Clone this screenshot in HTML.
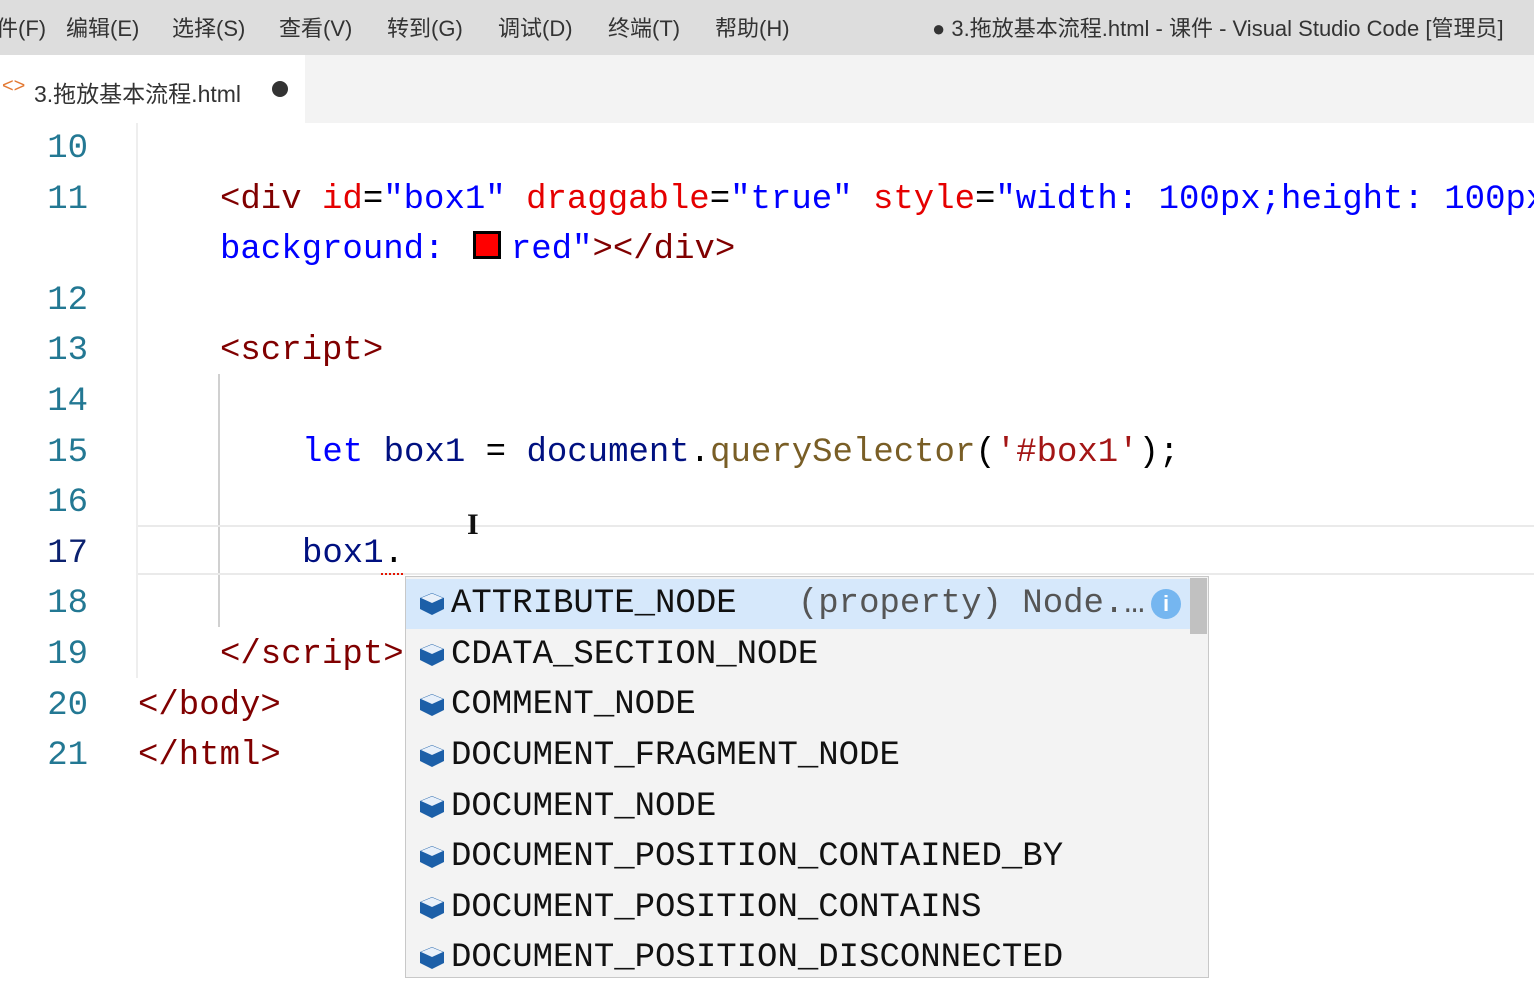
<!DOCTYPE html>
<html><head><meta charset="utf-8"><style>
body{margin:0;width:1534px;height:959px;overflow:hidden;background:#fff;position:relative;font-family:"Liberation Sans","Noto Sans CJK SC",sans-serif}
#menu{position:absolute;left:0;top:0;width:1534px;height:55px;background:#dddddd;color:#333;font-size:22px}
#menu span{position:absolute;top:11px}
#tabs{position:absolute;left:0;top:55px;width:1534px;height:68px;background:#f3f3f3}
#tab{position:absolute;left:0;top:0;width:305px;height:68px;background:#fff;font-size:23px;color:#333}
.code{position:absolute;font-family:"Liberation Mono",monospace;font-size:34px;line-height:50px;white-space:pre}
.ln{position:absolute;left:0;width:88px;text-align:right;color:#237893;font-family:"Liberation Mono",monospace;font-size:34px;line-height:50px}
.t{color:#800000}.a{color:#e50000}.v{color:#0000ff}.k{color:#0000ff}.i{color:#001080}.f{color:#795e26}.s{color:#a31515}.p{color:#000}
#pop{position:absolute;left:405px;top:576px;width:802px;height:400px;background:#f3f3f3;border:1px solid #c8c8c8}
.row{position:absolute;left:0;width:784px;height:50px;font-family:"Liberation Mono",monospace;font-size:34px;line-height:50px;white-space:pre;color:#111}
.row svg{position:absolute;left:12px;top:12px}
.row span.n{position:absolute;left:45px}
</style></head><body>
<div id="menu">
<span style="left:-4px">件(F)</span><span style="left:66px">编辑(E)</span><span style="left:172px">选择(S)</span><span style="left:279px">查看(V)</span><span style="left:387px">转到(G)</span><span style="left:498px">调试(D)</span><span style="left:608px">终端(T)</span><span style="left:715px">帮助(H)</span>
<span style="left:932px">● 3.拖放基本流程.html - 课件 - Visual Studio Code [管理员]</span>
</div>
<div id="tabs"><div id="tab"><span style="position:absolute;left:2px;top:20px;color:#e37933;font-size:20px">&lt;&gt;</span><span style="position:absolute;left:34px;top:20px">3.拖放基本流程.html</span><span style="position:absolute;left:272px;top:26px;width:16px;height:16px;border-radius:50%;background:#333"></span></div></div>
<div style="position:absolute;left:136px;top:123px;width:2px;height:555px;background:#eee"></div>
<div style="position:absolute;left:218px;top:374px;width:2px;height:253px;background:#d0d0d0"></div>
<div style="position:absolute;left:138px;top:525px;width:1400px;height:46px;border-top:2px solid #eaeaea;border-bottom:2px solid #eaeaea"></div>

<div class="ln" style="top:124px">10</div>
<div class="ln" style="top:175px">11</div>
<div class="ln" style="top:276px">12</div>
<div class="ln" style="top:326px">13</div>
<div class="ln" style="top:377px">14</div>
<div class="ln" style="top:428px">15</div>
<div class="ln" style="top:478px">16</div>
<div class="ln" style="top:529px;color:#0b216f">17</div>
<div class="ln" style="top:579px">18</div>
<div class="ln" style="top:630px">19</div>
<div class="ln" style="top:681px">20</div>
<div class="ln" style="top:731px">21</div>

<div class="code" style="left:220px;top:175px"><span class="t">&lt;div</span> <span class="a">id</span><span class="p">=</span><span class="v">"box1"</span> <span class="a">draggable</span><span class="p">=</span><span class="v">"true"</span> <span class="a">style</span><span class="p">=</span><span class="v">"width: 100px;height: 100px;</span></div>
<div class="code" style="left:220px;top:225px"><span class="v">background: </span><span style="display:inline-block;width:22px;height:22px;background:#f00;border:3px solid #000;margin:0 10px 0 8px;vertical-align:-1px"></span><span class="v">red"</span><span class="t">&gt;&lt;/div&gt;</span></div>
<div class="code t" style="left:220px;top:326px">&lt;script&gt;</div>
<div class="code" style="left:302px;top:428px"><span class="k">let</span> <span class="i">box1</span> <span class="p">=</span> <span class="i">document</span><span class="p">.</span><span class="f">querySelector</span><span class="p">(</span><span class="s">'#box1'</span><span class="p">);</span></div>
<div class="code i" style="left:302px;top:529px">box1<span class="p">.</span></div>
<div style="position:absolute;left:381px;top:568px;width:22px;height:5px;border-bottom:2px dotted #e51400"></div>
<div class="code t" style="left:220px;top:630px">&lt;/script&gt;</div>
<div class="code t" style="left:138px;top:681px">&lt;/body&gt;</div>
<div class="code t" style="left:138px;top:731px">&lt;/html&gt;</div>
<div style="position:absolute;left:467px;top:508px;font-family:'Liberation Serif',serif;font-size:30px;font-weight:bold;color:#111">I</div>

<div id="pop">
<div style="position:absolute;left:784px;top:1px;width:17px;height:56px;background:#c1c1c1"></div>
<div class="row" style="top:2px;background:#d6e8fb"><svg width="28" height="26" viewBox="0 0 28 26"><path d="M14 2 L26 7 L26 18 L14 24 L2 18 L2 7Z" fill="#1c5fa8"/><path d="M3 7 L14 2.5 L25 7 L14 12Z" fill="#e8f0fa"/></svg><span class="n">ATTRIBUTE_NODE   <span style="color:#555">(property) Node.…</span></span><span style="position:absolute;left:745px;top:10px;width:30px;height:30px;border-radius:50%;background:#75b6f0;color:#fff;font:bold 22px 'Liberation Sans';text-align:center;line-height:30px">i</span></div>
<div class="row" style="top:53px"><svg width="28" height="26" viewBox="0 0 28 26"><path d="M14 2 L26 7 L26 18 L14 24 L2 18 L2 7Z" fill="#1c5fa8"/><path d="M3 7 L14 2.5 L25 7 L14 12Z" fill="#e8f0fa"/></svg><span class="n">CDATA_SECTION_NODE</span></div>
<div class="row" style="top:103px"><svg width="28" height="26" viewBox="0 0 28 26"><path d="M14 2 L26 7 L26 18 L14 24 L2 18 L2 7Z" fill="#1c5fa8"/><path d="M3 7 L14 2.5 L25 7 L14 12Z" fill="#e8f0fa"/></svg><span class="n">COMMENT_NODE</span></div>
<div class="row" style="top:154px"><svg width="28" height="26" viewBox="0 0 28 26"><path d="M14 2 L26 7 L26 18 L14 24 L2 18 L2 7Z" fill="#1c5fa8"/><path d="M3 7 L14 2.5 L25 7 L14 12Z" fill="#e8f0fa"/></svg><span class="n">DOCUMENT_FRAGMENT_NODE</span></div>
<div class="row" style="top:205px"><svg width="28" height="26" viewBox="0 0 28 26"><path d="M14 2 L26 7 L26 18 L14 24 L2 18 L2 7Z" fill="#1c5fa8"/><path d="M3 7 L14 2.5 L25 7 L14 12Z" fill="#e8f0fa"/></svg><span class="n">DOCUMENT_NODE</span></div>
<div class="row" style="top:255px"><svg width="28" height="26" viewBox="0 0 28 26"><path d="M14 2 L26 7 L26 18 L14 24 L2 18 L2 7Z" fill="#1c5fa8"/><path d="M3 7 L14 2.5 L25 7 L14 12Z" fill="#e8f0fa"/></svg><span class="n">DOCUMENT_POSITION_CONTAINED_BY</span></div>
<div class="row" style="top:306px"><svg width="28" height="26" viewBox="0 0 28 26"><path d="M14 2 L26 7 L26 18 L14 24 L2 18 L2 7Z" fill="#1c5fa8"/><path d="M3 7 L14 2.5 L25 7 L14 12Z" fill="#e8f0fa"/></svg><span class="n">DOCUMENT_POSITION_CONTAINS</span></div>
<div class="row" style="top:356px"><svg width="28" height="26" viewBox="0 0 28 26"><path d="M14 2 L26 7 L26 18 L14 24 L2 18 L2 7Z" fill="#1c5fa8"/><path d="M3 7 L14 2.5 L25 7 L14 12Z" fill="#e8f0fa"/></svg><span class="n">DOCUMENT_POSITION_DISCONNECTED</span></div>
</div>
</body></html>
